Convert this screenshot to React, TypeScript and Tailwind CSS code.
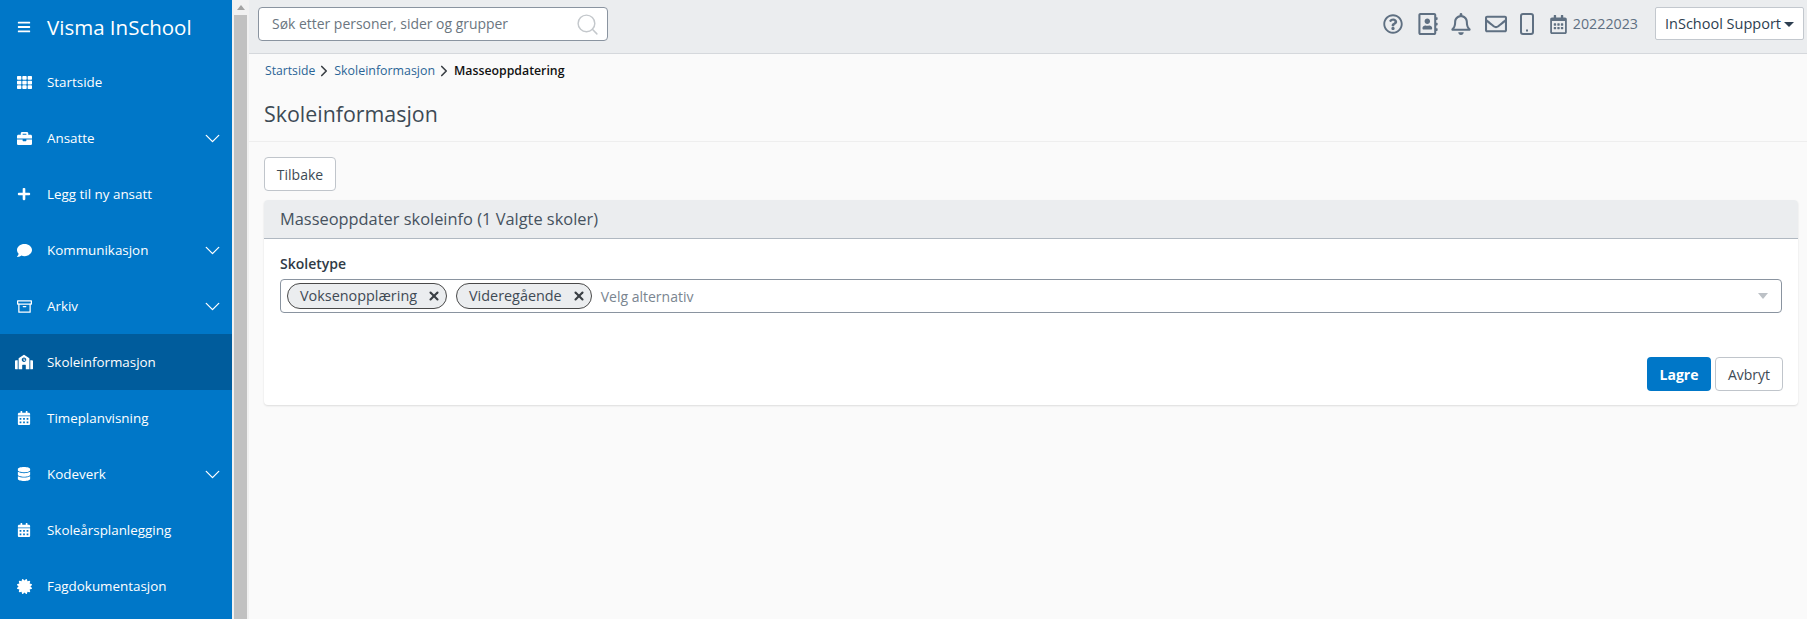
import type { ReactNode } from "react";
import { ChevronDown, ChevronRight, Search, X } from "lucide-react";
import {
  FaBars,
  FaBriefcase,
  FaCalendarAlt,
  FaCertificate,
  FaComment,
  FaDatabase,
  FaPlus,
  FaRegAddressBook,
  FaRegBell,
  FaRegCalendarAlt,
  FaRegEnvelope,
  FaRegQuestionCircle,
  FaSchool,
  FaTh,
} from "react-icons/fa";
import { FiArchive } from "react-icons/fi";

const navItems: { label: string; icon: ReactNode; chevron?: boolean; active?: boolean }[] = [
  { label: "Startside", icon: <FaTh size={15} /> },
  { label: "Ansatte", icon: <FaBriefcase size={15} />, chevron: true },
  { label: "Legg til ny ansatt", icon: <FaPlus size={14} /> },
  { label: "Kommunikasjon", icon: <FaComment size={15} />, chevron: true },
  { label: "Arkiv", icon: <FiArchive size={15} />, chevron: true },
  { label: "Skoleinformasjon", icon: <FaSchool size={18} />, active: true },
  { label: "Timeplanvisning", icon: <FaCalendarAlt size={14} /> },
  { label: "Kodeverk", icon: <FaDatabase size={14} />, chevron: true },
  { label: "Skoleårsplanlegging", icon: <FaCalendarAlt size={14} /> },
  { label: "Fagdokumentasjon", icon: <FaCertificate size={15} /> },
];

function Pill({ label }: { label: string }) {
  return (
    <span className="flex h-[26px] items-center rounded-full border border-[#494949] bg-[#ebedef] pl-[12px] pr-[5px] text-[14.4px] text-[#3f4a55]">
      {label}
      <X size={14} strokeWidth={3.6} className="ml-[10px] text-[#3a3f44]" />
    </span>
  );
}

function PhoneIcon() {
  return (
    <svg width="14" height="22" viewBox="0 0 14 22" fill="none" className="ml-[13px]">
      <rect x="1" y="1" width="12" height="20" rx="2" stroke="currentColor" strokeWidth="2" />
      <rect x="6" y="16.5" width="2" height="2" fill="currentColor" />
    </svg>
  );
}

export default function App() {
  return (
    <div className="flex h-[619px] w-[1807px] overflow-hidden bg-[#fafafa] font-['Open_Sans',sans-serif]">
      {/* sidebar */}
      <aside className="flex w-[232px] shrink-0 flex-col bg-[#0077c8] text-white">
        <div className="flex h-[54px] items-center pl-[17px]">
          <FaBars size={14} />
          <span className="ml-[16px] text-[20.5px] font-medium leading-none">Visma InSchool</span>
        </div>
        {navItems.map((item) => (
          <div
            key={item.label}
            className={`flex h-[56px] shrink-0 items-center ${item.active ? "bg-[#005c9c]" : ""}`}
          >
            <span className="flex w-[47px] shrink-0 justify-center pl-[1px]">{item.icon}</span>
            <span className="pt-[1px] text-[13.4px] font-medium">{item.label}</span>
            {item.chevron && <ChevronDown size={25} strokeWidth={1.25} className="ml-auto mr-[7px]" />}
          </div>
        ))}
      </aside>

      {/* page scrollbar */}
      <div className="flex w-[17px] shrink-0 flex-col items-center bg-[#f1f1f1]">
        <div className="mt-[5px] h-0 w-0 border-x-[4px] border-b-[5px] border-x-transparent border-b-[#a3a3a3]" />
        <div className="mt-[5px] w-[13px] flex-1 bg-[#c1c1c1]" />
      </div>

      <main className="flex min-w-0 flex-1 flex-col">
        {/* top bar */}
        <header className="flex h-[54px] shrink-0 items-center border-b border-[#d5d8dc] bg-[#ebedef] pb-[5px] pl-[9px] pr-[3px]">
          <div className="flex h-[34px] w-[350px] items-center justify-between rounded-[4px] border border-[#8a94a0] bg-white pl-[13px] pr-[7px]">
            <span className="pt-[1px] text-[13.95px] text-[#6b7680]">Søk etter personer, sider og grupper</span>
            <Search size={25} strokeWidth={1.4} className="text-[#c4c8cc]" />
          </div>
          <div className="ml-auto flex items-center text-[#5f7082]">
            <FaRegQuestionCircle size={20} />
            <FaRegAddressBook size={22} className="ml-[14px]" />
            <FaRegBell size={22} className="ml-[11px]" />
            <FaRegEnvelope size={22} className="ml-[13px]" />
            <PhoneIcon />
            <FaRegCalendarAlt size={19} className="ml-[15px]" />
            <span className="ml-[5px] text-[14.25px] font-medium">20222023</span>
          </div>
          <div className="mb-[1px] ml-[17px] flex h-[33px] w-[149px] items-center justify-center rounded-[2px] border border-[#c3c8ce] bg-white text-[14.5px] font-medium text-[#2d3e50]">
            InSchool Support
            <span className="ml-[3px] mt-[1px] h-0 w-0 border-x-[5px] border-t-[5px] border-x-transparent border-t-[#2d3e50]" />
          </div>
        </header>

        {/* breadcrumb + title */}
        <div className="flex h-[88px] shrink-0 flex-col border-b border-[#eeeeee] pl-[15px]">
          <nav className="ml-[1px] mt-[8px] flex items-center text-[12.2px]">
            <span className="text-[#2a6496]">Startside</span>
            <ChevronRight size={18} strokeWidth={2.2} className="text-[#3a3f44]" />
            <span className="ml-[1px] text-[12.4px] text-[#2a6496]">Skoleinformasjon</span>
            <ChevronRight size={18} strokeWidth={2.2} className="text-[#3a3f44]" />
            <span className="ml-[1px] font-semibold text-[12.3px] text-[#111111]">Masseoppdatering</span>
          </nav>
          <h1 className="mt-[19px] text-[21.4px] leading-[28px] text-[#3d4a55]">Skoleinformasjon</h1>
        </div>

        <section className="pb-0 pl-[15px] pr-[9px] pt-[15px]">
          <button className="h-[34px] w-[72px] rounded-[4px] border border-[#c0c5cb] bg-white text-[14px] text-[#3d4a55]">
            Tilbake
          </button>

          <div className="mt-[9px] rounded-[4px] bg-white shadow-[0_1px_2px_rgba(0,0,0,0.12)]">
            <div className="flex h-[39px] items-center rounded-t-[4px] border-b border-[#b0b8c1] bg-[#ebedef] pl-[16px] text-[16.4px] text-[#46525e]">
              Masseoppdater skoleinfo (1 Valgte skoler)
            </div>
            <div className="px-[16px] pt-[15px]">
              <label className="block text-[14px] font-semibold leading-[19px] text-[#2f3a45]">Skoletype</label>
              <div className="mt-[6px] flex h-[34px] items-center gap-[9px] rounded-[4px] border border-[#8a94a0] pl-[6px] pr-[13px]">
                <Pill label="Voksenopplæring" />
                <Pill label="Videregående" />
                <span className="text-[14px] text-[#7a8590]">Velg alternativ</span>
                <span className="ml-auto h-0 w-0 border-x-[5px] border-t-[6px] border-x-transparent border-t-[#bcc1c6]" />
              </div>
              <div className="-mr-[1px] mt-[44px] flex justify-end gap-[4px] pb-[14px]">
                <button className="h-[34px] w-[64px] rounded-[4px] bg-[#0077c8] text-[14px] font-bold text-white">
                  Lagre
                </button>
                <button className="h-[34px] w-[68px] rounded-[4px] border border-[#c0c5cb] bg-white text-[14px] text-[#3d4a55]">
                  Avbryt
                </button>
              </div>
            </div>
          </div>
        </section>
      </main>
    </div>
  );
}
